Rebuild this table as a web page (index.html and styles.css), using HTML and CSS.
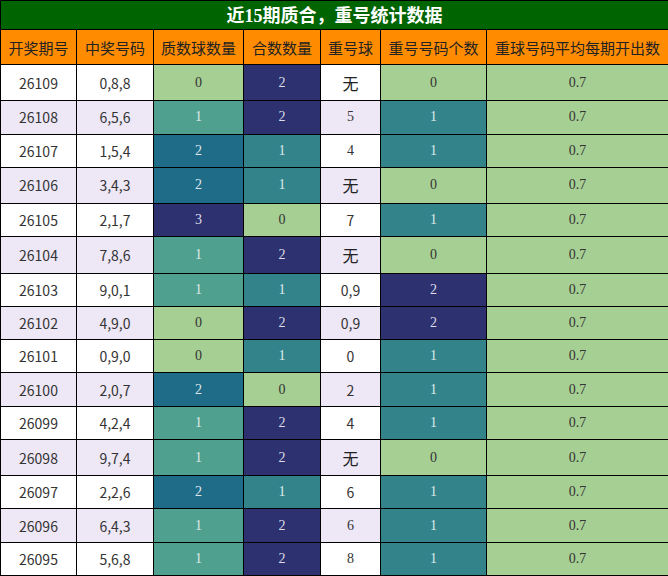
FILE: index.html
```html
<!DOCTYPE html>
<html lang="zh">
<head>
<meta charset="utf-8">
<link rel="stylesheet" href="styles.css">
</head>
<body>
<table class="stats">
  <colgroup>
    <col class="c1"><col class="c2"><col class="c3"><col class="c4"><col class="c5"><col class="c6"><col class="c7">
  </colgroup>
  <thead>
    <tr class="title-row"><th colspan="7" class="title">近<span class="lat">15</span>期质合，重号统计数据</th></tr>
    <tr class="head-row">
      <th>开奖期号</th><th>中奖号码</th><th>质数球数量</th><th>合数数量</th><th>重号球</th><th>重号号码个数</th><th>重球号码平均每期开出数</th>
    </tr>
  </thead>
  <tbody>
    <tr class="w tall"><td class="p">26109</td><td class="p">0,8,8</td><td class="n g0">0</td><td class="n h2">2</td><td class="cjk">无</td><td class="n h0">0</td><td class="n g0">0.7</td></tr>
    <tr class="l"><td class="p">26108</td><td class="p">6,5,6</td><td class="n q1">1</td><td class="n h2">2</td><td class="n">5</td><td class="n h1">1</td><td class="n g0">0.7</td></tr>
    <tr class="w"><td class="p">26107</td><td class="p">1,5,4</td><td class="n q2">2</td><td class="n h1">1</td><td class="n">4</td><td class="n h1">1</td><td class="n g0">0.7</td></tr>
    <tr class="l tall"><td class="p">26106</td><td class="p">3,4,3</td><td class="n q2">2</td><td class="n h1">1</td><td class="cjk">无</td><td class="n h0">0</td><td class="n g0">0.7</td></tr>
    <tr class="w"><td class="p">26105</td><td class="p">2,1,7</td><td class="n q3">3</td><td class="n h0">0</td><td class="p">7</td><td class="n h1">1</td><td class="n g0">0.7</td></tr>
    <tr class="l tall"><td class="p">26104</td><td class="p">7,8,6</td><td class="n q1">1</td><td class="n h2">2</td><td class="cjk">无</td><td class="n h0">0</td><td class="n g0">0.7</td></tr>
    <tr class="w"><td class="p">26103</td><td class="p">9,0,1</td><td class="n q1">1</td><td class="n h1">1</td><td class="p">0,9</td><td class="n h2">2</td><td class="n g0">0.7</td></tr>
    <tr class="l"><td class="p">26102</td><td class="p">4,9,0</td><td class="n g0">0</td><td class="n h2">2</td><td class="p">0,9</td><td class="n h2">2</td><td class="n g0">0.7</td></tr>
    <tr class="w"><td class="p">26101</td><td class="p">0,9,0</td><td class="n g0">0</td><td class="n h1">1</td><td class="p">0</td><td class="n h1">1</td><td class="n g0">0.7</td></tr>
    <tr class="l"><td class="p">26100</td><td class="p">2,0,7</td><td class="n q2">2</td><td class="n h0">0</td><td class="p">2</td><td class="n h1">1</td><td class="n g0">0.7</td></tr>
    <tr class="w"><td class="p">26099</td><td class="p">4,2,4</td><td class="n q1">1</td><td class="n h2">2</td><td class="p">4</td><td class="n h1">1</td><td class="n g0">0.7</td></tr>
    <tr class="l tall"><td class="p">26098</td><td class="p">9,7,4</td><td class="n q1">1</td><td class="n h2">2</td><td class="cjk">无</td><td class="n h0">0</td><td class="n g0">0.7</td></tr>
    <tr class="w"><td class="p">26097</td><td class="p">2,2,6</td><td class="n q2">2</td><td class="n h1">1</td><td class="p">6</td><td class="n h1">1</td><td class="n g0">0.7</td></tr>
    <tr class="l"><td class="p">26096</td><td class="p">6,4,3</td><td class="n q1">1</td><td class="n h2">2</td><td class="n">6</td><td class="n h1">1</td><td class="n g0">0.7</td></tr>
    <tr class="w"><td class="p">26095</td><td class="p">5,6,8</td><td class="n q1">1</td><td class="n h2">2</td><td class="n">8</td><td class="n h1">1</td><td class="n g0">0.7</td></tr>
  </tbody>
</table>
</body>
</html>
```
FILE: styles.css
```css
html, body {
  margin: 0;
  padding: 0;
  background: #ffffff;
}
.stats {
  width: 668px;
  border-collapse: collapse;
  table-layout: fixed;
  font-family: "Noto Sans CJK SC", sans-serif;
  color: #222222;
}
.c1 { width: 76px; }
.c2 { width: 77px; }
.c3 { width: 90px; }
.c4 { width: 77px; }
.c5 { width: 60px; }
.c6 { width: 106px; }
.c7 { width: 182px; }
.stats th, .stats td {
  border: 1px solid #000000;
  padding: 0;
  text-align: center;
  vertical-align: middle;
  overflow: hidden;
  white-space: nowrap;
}
.title {
  background: #006400;
  color: #ffffff;
  font-size: 18px;
  font-weight: bold;
  height: 26px;
  line-height: 26px;
}
.lat {
  font-family: "Liberation Serif", serif;
}
.head-row th {
  background: #ff8c00;
  font-weight: normal;
  font-size: 15px;
  height: 34px;
  color: #222222;
}
.stats td {
  height: 32.27px;
  font-size: 14px;
  line-height: 20px;
  color: #333333;
}
.stats tr.tall td {
  height: 35.27px;
}
.w td { background: #ffffff; }
.l td { background: #ede7f6; }
.stats td.n {
  font-family: "Liberation Serif", serif;
  font-size: 14px;
}
.stats td.cjk {
  font-size: 16px;
  color: #222222;
}
.stats td.g0, .stats td.h0 { background: #a6cf94; color: #333333; }
.stats td.q1 { background: #50a08f; color: #dfe8e6; }
.stats td.q2 { background: #1f6c88; color: #dfe6ea; }
.stats td.q3, .stats td.h2 { background: #2d3170; color: #dcdde8; }
.stats td.h1 { background: #32848a; color: #dfe9ea; }
```
